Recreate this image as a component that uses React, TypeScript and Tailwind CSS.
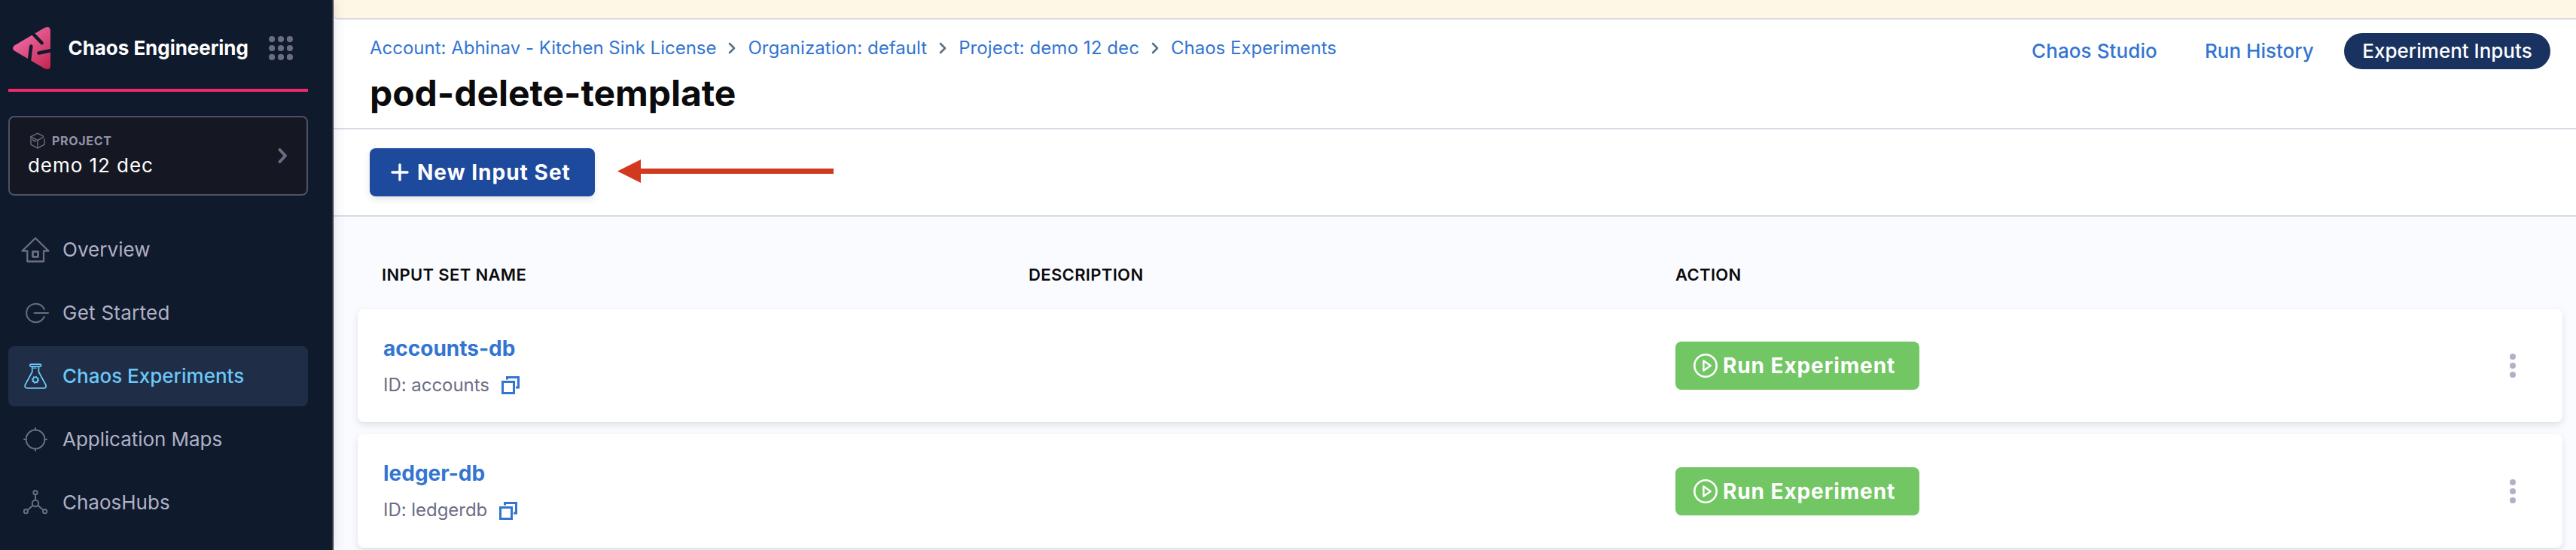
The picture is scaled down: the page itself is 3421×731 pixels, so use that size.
import type { ReactNode } from "react";

function ProductLogo() {
  return (
    <svg width="52" height="60" viewBox="16 34 52 60" className="block shrink-0">
      <defs>
        <linearGradient id="logo-fill" x1="24" y1="44" x2="68" y2="92" gradientUnits="userSpaceOnUse">
          <stop offset="0" stopColor="#ee6ea6" />
          <stop offset="1" stopColor="#c4224f" />
        </linearGradient>
      </defs>
      <path
        d="M19.5 60.2 59 37Q67 33.500 67 41V87Q67 94.500 59 91L19.500 67.800Q14.500 64 19.500 60.200Z"
        fill="url(#logo-fill)"
      />
      <g stroke="#0f1a2d" strokeWidth="4.600" strokeLinecap="round">
        <path d="M43 44 55.500 57" />
        <path d="M38.600 83 41.300 61.500" />
        <path d="M70 66.600 51.500 70.500" />
      </g>
    </svg>
  );
}

function AppGrid() {
  const points = [4, 15.6, 27.2];
  return (
    <svg width="32" height="32" viewBox="0 0 31.200 31.200" fill="#6b6d85" className="block shrink-0">
      {points.map((y) => points.map((x) => <circle key={`${x}-${y}`} cx={x} cy={y} r="4" />))}
    </svg>
  );
}

function CubeIcon() {
  return (
    <svg width="20" height="22" viewBox="0 0 20 22" fill="none" stroke="#6b6d85" strokeWidth="1.400" strokeLinejoin="round" strokeLinecap="round" className="block shrink-0">
      <path d="M17.500 5.200 10 1.200 1 5.600V16.200L10 20.800 19 16.200V8.500" />
      <path d="M1 5.600 10 10.600 17.500 6.200" />
      <path d="M10 10.600V20.500" />
      <path d="M3.500 10 7 12" strokeWidth="1.800" />
    </svg>
  );
}

function NavSvg({ children }: { children: ReactNode }) {
  return (
    <svg width="40" height="40" viewBox="0 0 40 40" fill="none" stroke="currentColor" strokeWidth="2" strokeLinejoin="round" strokeLinecap="round" className="block shrink-0">
      {children}
    </svg>
  );
}

const navItems = [
  {
    label: "Overview",
    text: "tracking-[0.05px]",
    icon: (
      <NavSvg>
        <path d="M9.300 21.500H2.500L20 4.500 37.500 21.500H31V35.500H9.300Z" strokeWidth="2.300" />
        <rect x="16.500" y="22.300" width="7" height="7" strokeWidth="2.800" />
      </NavSvg>
    ),
  },
  {
    label: "Get Started",
    text: "tracking-[0.25px]",
    icon: (
      <NavSvg>
        <path d="M31.700 15A12.300 12.300 0 1 0 31.700 25" />
        <path d="M18.500 20H37" />
      </NavSvg>
    ),
  },
  {
    label: "Chaos Experiments",
    text: "",
    active: true,
    icon: (
      <NavSvg>
        <rect x="12.800" y="4.200" width="14.800" height="3" rx="1.200" strokeWidth="1.700" />
        <path d="M15.800 7.200V14.200L6.400 31.500Q5.300 35.600 9 35.900H31Q35 35.600 33.800 31.500L24.400 14.200V7.200" strokeWidth="1.800" />
        <path d="M17.500 9.200H21" strokeWidth="1.200" />
        <circle cx="20" cy="24.800" r="3.400" strokeWidth="1.900" />
        <circle cx="20" cy="24.800" r="4.500" strokeWidth="1.300" strokeDasharray="1.400 2.130" strokeLinecap="butt" />
      </NavSvg>
    ),
  },
  {
    label: "Application Maps",
    text: "tracking-[-0.05px]",
    icon: (
      <NavSvg>
        <circle cx="20" cy="20" r="12.400" />
        <path d="M20 5V7.600M20 32.400V35M5 20H7.600M32.400 20H35" />
      </NavSvg>
    ),
  },
  {
    label: "ChaosHubs",
    text: "",
    icon: (
      <NavSvg>
        <circle cx="20" cy="6.700" r="2.600" />
        <circle cx="20" cy="21" r="4.200" />
        <circle cx="7.400" cy="31.700" r="2.600" />
        <circle cx="32.600" cy="31.700" r="2.600" />
        <path d="M20 9.500V16.500M16.700 23.800 9.500 29.900M23.300 23.800 30.500 29.900" />
      </NavSvg>
    ),
  },
];

function Sidebar() {
  return (
    <aside className="z-10 flex w-[443px] shrink-0 flex-col border-r-2 border-[#383946] bg-[#0f1a2d] pl-[11px] pr-8 shadow-[0_0_16px_rgba(40,60,90,0.16)]">
      <div className="flex h-[122px] items-center border-b-4 border-[#ee2b68] pl-[5px] pt-[10px]">
        <ProductLogo />
        <span className="ml-[22.500px] w-[266.500px] text-[26px] font-bold leading-8 tracking-[-0.050px] text-white">
          Chaos Engineering
        </span>
        <AppGrid />
      </div>

      <div className="mt-8 flex h-[106px] items-center rounded-lg border-2 border-[#4f5162] bg-[#151722] pl-[24px] pr-[25px]">
        <div className="flex flex-1 flex-col pb-[3px]">
          <div className="flex items-center pl-[3px]">
            <CubeIcon />
            <span className="ml-[9px] text-[16px] font-bold leading-6 tracking-[0.700px] text-[#9293ab]">PROJECT</span>
          </div>
          <span className="mt-[5px] text-[26px] leading-8 tracking-[0.950px] text-white">demo 12 dec</span>
        </div>
        <svg width="14" height="22" viewBox="0 0 14 22" fill="none" stroke="#6b6d85" strokeWidth="4" strokeLinecap="round" strokeLinejoin="round" className="block">
          <path d="M3.500 3 11 11 3.500 19" />
        </svg>
      </div>

      <nav className="mt-8 flex flex-col gap-1">
        {navItems.map((item) => (
          <div
            key={item.label}
            className={
              item.active
                ? "flex h-20 items-center gap-4 rounded-lg bg-[#202d47] pl-4 text-[#6bc7f5]"
                : "flex h-20 items-center gap-4 pl-4 text-[#6b6d85]"
            }
          >
            {item.icon}
            <span
              className={`${item.text} text-[26px] leading-8 ${item.active ? "font-medium" : "text-[#b0b1c4]"}`}
            >
              {item.label}
            </span>
          </div>
        ))}
      </nav>
    </aside>
  );
}

const crumbs = [
  { label: "Account: Abhinav - Kitchen Sink License", text: "tracking-[-0.010px]" },
  { label: "Organization: default", text: "tracking-[0.05px]" },
  { label: "Project: demo 12 dec", text: "tracking-[0.1px]" },
  { label: "Chaos Experiments", text: "" },
];

function PageHeader() {
  return (
    <header className="flex h-[146px] justify-between border-b-2 border-[#d9dae6] bg-white pl-[48px] pr-[34px]">
      <div className="pt-[22px]">
        <div className="flex h-8 items-center gap-4 whitespace-nowrap text-[24px] leading-8 text-[#3375d1]">
          {crumbs.map((crumb, i) => (
            <span key={crumb.label} className="flex items-center gap-4">
              {i > 0 && (
                <svg width="10" height="16" viewBox="0 0 10 16" fill="none" stroke="#5c7080" strokeWidth="2.600" strokeLinecap="round" strokeLinejoin="round" className="block">
                  <path d="M2 2 8 8 2 14" />
                </svg>
              )}
              <span className={crumb.text}>{crumb.label}</span>
            </span>
          ))}
        </div>
        <h1 className="mt-4 text-[48px] font-bold leading-[56px] tracking-[-0.05px] text-[#0b0b0d]">
          pod-delete-template
        </h1>
      </div>
      <div className="mt-[18px] flex h-12 items-center text-[26px] font-medium leading-8 text-[#3375d1]">
        <span className="w-[230px] tracking-[0.1px]">Chaos Studio</span>
        <span className="w-[185px]">Run History</span>
        <span className="flex h-12 w-[274px] items-center justify-center rounded-full bg-[#19325f] text-white">
          Experiment Inputs
        </span>
      </div>
    </header>
  );
}

function Toolbar() {
  return (
    <div className="flex h-[116px] items-center border-b-2 border-[#d9dae6] bg-white pl-12">
      <button className="flex h-16 w-[299px] items-center rounded-lg bg-[#1e4a9e] pl-7 text-[28px] font-bold leading-8 tracking-[1.020px] text-white shadow-[0_4px_8px_rgba(96,97,112,0.16),0_0_2px_rgba(40,41,61,0.04)]">
        <svg width="24" height="24" viewBox="0 0 24 24" stroke="currentColor" strokeWidth="3.400" strokeLinecap="round" className="mr-[11px] block shrink-0">
          <path d="M12 2V22M2 12H22" />
        </svg>
        New Input Set
      </button>
      <svg width="288" height="31" viewBox="0 0 288 31" fill="#d23a20" className="mb-[3px] ml-[30px] block">
        <path d="M0 15.500 31 0V12H287V19H31V31Z" />
      </svg>
    </div>
  );
}

function CopyIcon({ className }: { className: string }) {
  return (
    <svg width="24" height="24" viewBox="0 0 24 24" fill="none" stroke="#3375d1" strokeWidth="3" className={className}>
      <rect x="1.500" y="7.500" width="15" height="15" />
      <path d="M7.500 4.500V1.500H22.500V15H19" />
    </svg>
  );
}

function PlayIcon() {
  return (
    <svg width="32" height="32" viewBox="0 0 32 32" fill="none" stroke="currentColor" strokeLinejoin="round" className="block shrink-0">
      <circle cx="16" cy="16" r="14.700" strokeWidth="2.600" />
      <path d="M13.400 9.500V22.500L22.700 16Z" strokeWidth="2.400" />
    </svg>
  );
}

const inputSets = [
  { name: "accounts-db", id: "accounts", card: "h-[150px]", action: "mt-[43px]", menu: "mt-[59px]", copy: "mt-0" },
  { name: "ledger-db", id: "ledgerdb", card: "h-[151px]", action: "mt-[44px]", menu: "mt-[60px]", copy: "mt-[2px]" },
];

function InputSetTable() {
  return (
    <section className="flex-1 bg-[#fafbff] pl-8 pr-[18px]">
      <div className="grid h-[123px] grid-cols-[859px_859px_1fr] pl-[32px] pt-[62px] text-[22px] font-semibold leading-[30px] tracking-[0.350px] text-[#0b0b0d]">
        <span>INPUT SET NAME</span>
        <span>DESCRIPTION</span>
        <span>ACTION</span>
      </div>
      <div className="flex flex-col gap-4">
        {inputSets.map((row) => (
          <div
            key={row.id}
            className={`${row.card} grid grid-cols-[857px_859px_1fr_70px] items-start rounded-lg bg-white pl-[34px] shadow-[0_0_2px_rgba(40,41,61,0.04),0_4px_8px_rgba(96,97,112,0.16)]`}
          >
            <div className="pt-[34px]">
              <div className="text-[28px] font-bold leading-9 text-[#3375d1]">{row.name}</div>
              <div className="mt-[15px] flex h-8 items-center gap-4 text-[24px] leading-8 text-[#6b6d85]">
                <span className="tracking-[-0.040px]">ID: {row.id}</span>
                <CopyIcon className={row.copy} />
              </div>
            </div>
            <div />
            <button
              className={`${row.action} flex h-16 w-[324px] items-center gap-[7px] rounded-lg bg-[#72c664] pl-6 text-[28px] font-bold leading-8 tracking-[0.900px] text-white`}
            >
              <PlayIcon />
              Run Experiment
            </button>
            <svg width="8" height="32" viewBox="0 0 8 32" fill="#b0b1c4" className={`${row.menu} block`}>
              <circle cx="4" cy="4" r="4" />
              <circle cx="4" cy="16" r="4" />
              <circle cx="4" cy="28" r="4" />
            </svg>
          </div>
        ))}
      </div>
    </section>
  );
}

export default function App() {
  return (
    <div className="flex h-[731px] w-full overflow-hidden bg-white font-['Inter',sans-serif]">
      <Sidebar />
      <main className="flex min-w-0 flex-1 flex-col">
        <div className="h-[26px] shrink-0 rounded-bl-md border-b-2 border-[#d9dae6] bg-[#fff7e6]" />
        <PageHeader />
        <Toolbar />
        <InputSetTable />
      </main>
    </div>
  );
}
